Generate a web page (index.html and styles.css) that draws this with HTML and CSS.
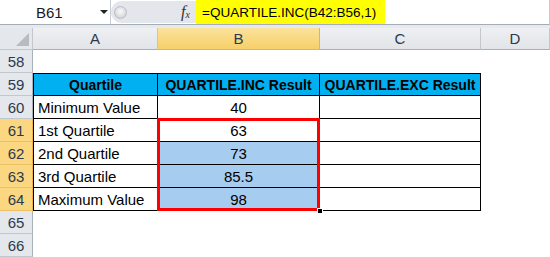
FILE: index.html
```
<!DOCTYPE html>
<html lang="en">
<head>
  <meta charset="UTF-8">
  <title>QUARTILE.INC</title>
  <link rel="stylesheet" href="styles.css">
</head>
<body>
  <div class="fbar">
    <div class="namebox">
      <span class="ref">B61</span>
      <span class="drop"></span>
    </div>
    <div class="splitter">
      <span class="knob"></span>
      <span class="fx">f<sub>x</sub></span>
    </div>
    <div class="formula"><span class="hl">=QUARTILE.INC(B42:B56,1)</span></div>
  </div>
  <div class="strip"></div>

  <div class="sheet">
    <div class="corner"><span class="tri"></span></div>
    <div class="colhead">A</div>
    <div class="colhead sel">B</div>
    <div class="colhead">C</div>
    <div class="colhead">D</div>

    <div class="rowhead">58</div>
    <div class="cell"></div><div class="cell"></div><div class="cell"></div><div class="cell"></div>

    <div class="rowhead">59</div>
    <div class="cell t th first top">Quartile</div>
    <div class="cell t th top">QUARTILE.INC Result</div>
    <div class="cell t th top">QUARTILE.EXC Result</div>
    <div class="cell"></div>

    <div class="rowhead">60</div>
    <div class="cell t first">Minimum Value</div>
    <div class="cell t num">40</div>
    <div class="cell t"></div>
    <div class="cell"></div>

    <div class="rowhead sel">61</div>
    <div class="cell t first">1st Quartile</div>
    <div class="cell t num">63</div>
    <div class="cell t"></div>
    <div class="cell"></div>

    <div class="rowhead sel">62</div>
    <div class="cell t first">2nd Quartile</div>
    <div class="cell t num picked">73</div>
    <div class="cell t"></div>
    <div class="cell"></div>

    <div class="rowhead sel">63</div>
    <div class="cell t first">3rd Quartile</div>
    <div class="cell t num picked">85.5</div>
    <div class="cell t"></div>
    <div class="cell"></div>

    <div class="rowhead sel">64</div>
    <div class="cell t first">Maximum Value</div>
    <div class="cell t num picked">98</div>
    <div class="cell t"></div>
    <div class="cell"></div>

    <div class="rowhead">65</div>
    <div class="cell"></div><div class="cell"></div><div class="cell"></div><div class="cell"></div>

    <div class="rowhead">66</div>
    <div class="cell"></div><div class="cell"></div><div class="cell"></div><div class="cell"></div>

    <div class="selection"><span class="handle"></span></div>
  </div>
</body>
</html>
```

FILE: styles.css
```
* {
  box-sizing: border-box;
}

body {
  margin: 0;
  width: 550px;
  height: 257px;
  overflow: hidden;
  background: #fff;
  font-family: 'Liberation Sans', Arial, sans-serif;
  color: #000;
}

/* formula bar */
.fbar {
  display: flex;
  height: 25px;
  border-bottom: 1px solid #a5acb5;
  border-right: 1px solid #c5c9cf;
  background: #fff;
}

.namebox {
  width: 111px;
  display: flex;
  align-items: center;
  border-right: 1px solid #c9ced6;
}

.ref {
  margin-left: 36px;
  font-size: 15px;
  color: #1a1a1a;
}

.drop {
  margin-left: 37px;
  width: 0;
  height: 0;
  border-left: 4px solid transparent;
  border-right: 4px solid transparent;
  border-top: 4px solid #222;
}

.splitter {
  width: 85px;
  display: flex;
  align-items: center;
  background: #e3e6ea;
  border-radius: 11px 0 0 11px;
  margin: 1px 0;
}

.knob {
  width: 13px;
  height: 13px;
  margin-left: 3px;
  border-radius: 50%;
  background: radial-gradient(circle at 50% 40%, #fafafa, #c5c9ce);
  border: 1px solid #b9bec5;
}

.fx {
  margin-left: auto;
  margin-right: 6px;
  font-family: 'Liberation Serif', serif;
  font-style: italic;
  font-size: 16px;
  color: #333;
}

.fx sub {
  font-size: 10px;
  vertical-align: -1px;
}

.formula {
  flex: 1;
  display: flex;
  align-items: stretch;
}

.hl {
  display: flex;
  align-items: center;
  padding: 0 9px 0 6px;
  background: #ffff00;
  font-size: 13.5px;
  white-space: nowrap;
}

.strip {
  height: 3px;
  background: #e6e9ed;
}

/* sheet grid */
.sheet {
  position: relative;
  display: grid;
  grid-template-columns: 33px 125px 162px 161px 69px;
  grid-template-rows: 22px repeat(9, 23px);
  font-size: 15px;
}

.corner {
  background: #e4e7eb;
  border-right: 1px solid #c2c7ce;
  border-bottom: 1px solid #c2c7ce;
  position: relative;
}

.tri {
  position: absolute;
  right: 3px;
  bottom: 3px;
  width: 0;
  height: 0;
  border-left: 13px solid transparent;
  border-bottom: 13px solid #b8bcc2;
}

.colhead {
  display: flex;
  align-items: center;
  justify-content: center;
  background: linear-gradient(#eef0f3, #e1e4e8);
  border-right: 1px solid #c2c7ce;
  border-bottom: 1px solid #a9b0b9;
  color: #2b3a4f;
  font-size: 15px;
}

.colhead.sel {
  background: linear-gradient(#fbe39c, #f6cf69);
  border-bottom: 1px solid #f0b444;
  border-right-color: #e3b35a;
}

.rowhead {
  display: flex;
  align-items: center;
  justify-content: center;
  background: #e4e7eb;
  border-right: 1px solid #a9b0b9;
  border-bottom: 1px solid #c2c7ce;
  color: #2b3a4f;
}

.rowhead.sel {
  background: #fad780;
  border-bottom-color: #ecc063;
  border-right-color: #f0b444;
}

.cell {
  display: flex;
  align-items: center;
  white-space: nowrap;
}

.cell.t {
  border-right: 1px solid #000;
  border-bottom: 1px solid #000;
  padding-left: 4px;
}

.cell.first {
  border-left: 1px solid #000;
}

.cell.top {
  border-top: 1px solid #000;
}

.cell.th {
  background: #00b0f0;
  font-weight: bold;
  justify-content: center;
  padding-left: 0;
  font-size: 14px;
}

.cell.num {
  justify-content: center;
  padding-left: 0;
}

.cell.picked {
  background: #a6cdef;
}

/* active range outline drawn over the cells */
.selection {
  position: absolute;
  left: 157px;
  top: 90px;
  width: 163px;
  height: 93px;
  border: 3px solid #ff0000;
  pointer-events: none;
}

.handle {
  position: absolute;
  right: -6px;
  bottom: -6px;
  width: 6px;
  height: 6px;
  background: #000;
  border: 1px solid #fff;
}
```
